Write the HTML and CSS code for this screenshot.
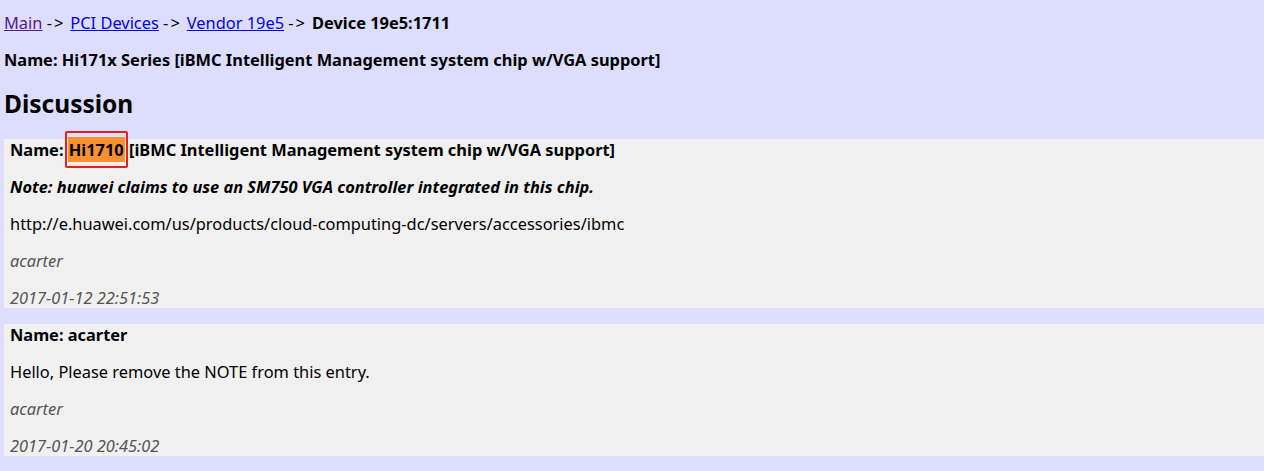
FILE: index.html
```html
<!DOCTYPE html>
<html>
<head>
<meta charset="utf-8">
<title>Device 19e5:1711</title>
<link rel="stylesheet" href="styles.css">
</head>
<body>
<p class="crumbs"><a class="visited" href="#">Main</a> <span class="sep">-&gt;</span><a href="#">PCI Devices</a> <span class="sep">-&gt;</span><a href="#">Vendor 19e5</a> <span class="sep">-&gt;</span><b>Device 19e5:1711</b></p>
<p class="name"><b>Name: Hi171x Series [iBMC Intelligent Management system chip w/VGA support]</b></p>
<h2 class="title">Discussion</h2>
<div class="comment">
  <p><b>Name: <span class="hl">Hi1710</span> [iBMC Intelligent Management system chip w/VGA support]</b></p>
  <p><b><i>Note: huawei claims to use an SM750 VGA controller integrated in this chip.</i></b></p>
  <p>http://e.huawei.com/us/products/cloud-computing-dc/servers/accessories/ibmc</p>
  <p class="meta">acarter</p>
  <p class="meta">2017-01-12 22:51:53</p>
</div>
<div class="comment">
  <p><b>Name: acarter</b></p>
  <p>Hello, Please remove the NOTE from this entry.</p>
  <p class="meta">acarter</p>
  <p class="meta">2017-01-20 20:45:02</p>
</div>
</body>
</html>
```
FILE: styles.css
```css
html, body {
  background: #ddddfd;
}
body {
  margin: 0;
  padding: 12px 0 0 4px;
  font-family: "Noto Sans", "Open Sans", sans-serif;
  font-size: 16.4px;
  line-height: 21px;
  color: #000;
}
p {
  margin: 16px 0;
}
.crumbs {
  margin-top: 0;
}
.sep {
  letter-spacing: 2px;
  margin-right: 5px;
}
a {
  color: #0000ee;
}
a.visited {
  color: #551a8b;
}
.title {
  font-size: 24.5px;
  line-height: 32px;
  margin: 18px 0 19px;
}
.comment {
  background: #f0f0f0;
  padding: 0 6px;
  margin-bottom: 16px;
}
.comment p:first-child {
  margin-top: 0;
}
.comment p:last-child {
  margin-bottom: 0;
}
.meta {
  font-style: italic;
  color: #555;
}
.hl {
  position: relative;
  background: #f7922f;
  padding: 1px 1px;
}
.hl::after {
  content: "";
  position: absolute;
  left: -3px;
  right: -3px;
  top: -6px;
  bottom: -6px;
  border: 2px solid #e8201c;
  border-radius: 2px;
}
```
